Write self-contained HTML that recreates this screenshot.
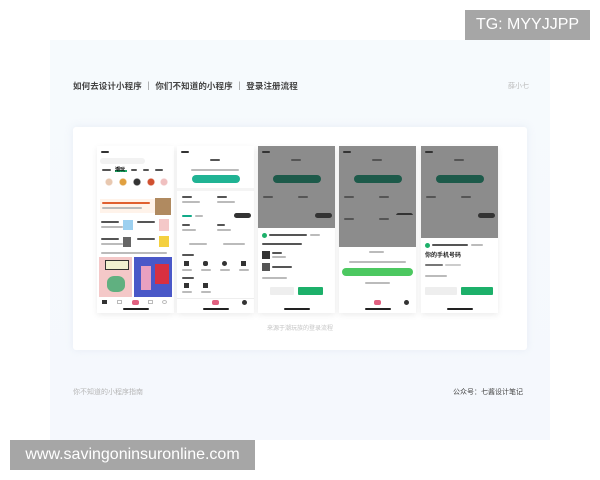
<!DOCTYPE html><html><head><meta charset="utf-8"><style>
*{margin:0;padding:0;box-sizing:border-box}
body{width:600px;height:480px;background:#fff;position:relative;overflow:hidden;font-family:"Liberation Sans","Noto Sans CJK SC",sans-serif}
.a{position:absolute}
.panel{left:50px;top:40px;width:500px;height:400px;background:linear-gradient(#f6fafd,#f5f8fd)}
.card{left:73px;top:127px;width:454px;height:223px;background:#fff;border-radius:3px;box-shadow:0 0 8px rgba(200,210,225,.3)}
.ph{top:146px;width:77px;height:167px;background:#fff;overflow:hidden;box-shadow:0 2px 6px rgba(0,0,0,.08)}
.g{position:absolute;height:2px;background:#bbb;border-radius:1px}
.gd{position:absolute;height:2px;background:#555;border-radius:1px}
.bar{position:absolute;left:26px;bottom:3px;width:26px;height:2px;background:#222;border-radius:1px}
.dark{position:absolute;left:0;top:0;width:77px;background:#8c8c8c}
.btn{position:absolute;border-radius:5px}
.t{position:absolute;font-size:5px;color:#333;white-space:nowrap}
</style></head><body>
<div class="a panel"></div>
<div class="a" style="left:73px;top:80px;font-size:8.5px;color:#444;font-weight:bold;letter-spacing:.1px">如何去设计小程序 ｜ 你们不知道的小程序 ｜ 登录注册流程</div>
<div class="a" style="left:508px;top:81px;font-size:7px;color:#bbb">薛小七</div>
<div class="a card"></div>

<!-- phone 1 -->
<div class="a ph" style="left:97px">
<div class="g" style="left:4px;top:5px;width:8px;background:#333"></div>
<div class="a" style="left:3px;top:12px;width:45px;height:6px;background:#f2f2f2;border-radius:3px"></div>
<div class="gd" style="left:5px;top:23px;width:9px"></div><div class="a" style="left:18px;top:20px;width:12px;height:6px;border-bottom:2px solid #1db06a;font-size:5px;font-weight:bold">潮玩</div>
<div class="gd" style="left:34px;top:23px;width:6px"></div><div class="gd" style="left:46px;top:23px;width:6px"></div><div class="gd" style="left:58px;top:23px;width:8px"></div>
<div class="a" style="left:4px;top:30px;width:68px;height:12px;background:radial-gradient(circle at 8px 6px,#e8c8b0 3px,transparent 4px),radial-gradient(circle at 22px 6px,#e0a040 3px,transparent 4px),radial-gradient(circle at 36px 6px,#333 3px,transparent 4px),radial-gradient(circle at 50px 6px,#d05030 3px,transparent 4px),radial-gradient(circle at 63px 6px,#f0c0c0 3px,transparent 4px)"></div>
<div class="a" style="left:3px;top:53px;width:55px;height:14px;background:#fff3ea"></div><div class="g" style="left:5px;top:56px;width:48px;background:#e06030"></div><div class="g" style="left:5px;top:61px;width:40px"></div>
<div class="a" style="left:58px;top:52px;width:16px;height:17px;background:#b08a60"></div>
<div class="gd" style="left:4px;top:75px;width:18px"></div><div class="g" style="left:4px;top:80px;width:22px"></div><div class="a" style="left:26px;top:74px;width:10px;height:10px;background:#9cd0f0"></div>
<div class="gd" style="left:40px;top:75px;width:18px"></div><div class="a" style="left:62px;top:73px;width:10px;height:12px;background:#f4c8c8"></div>
<div class="gd" style="left:4px;top:92px;width:18px"></div><div class="g" style="left:4px;top:97px;width:22px"></div><div class="a" style="left:26px;top:91px;width:8px;height:10px;background:#666"></div>
<div class="gd" style="left:40px;top:92px;width:18px"></div><div class="a" style="left:62px;top:90px;width:10px;height:11px;background:#f4d040"></div>
<div class="g" style="left:4px;top:106px;width:66px"></div>
<div class="a" style="left:2px;top:111px;width:33px;height:40px;background:#f4c8c8"></div><div class="a" style="left:8px;top:114px;width:24px;height:10px;background:#f0f0d0;border:1px solid #333"></div><div class="a" style="left:10px;top:130px;width:18px;height:16px;background:#60b080;border-radius:40%"></div>
<div class="a" style="left:37px;top:111px;width:38px;height:40px;background:#4a58c8"></div><div class="a" style="left:44px;top:120px;width:10px;height:24px;background:#e8a0c0"></div><div class="a" style="left:58px;top:118px;width:14px;height:20px;background:#d83040"></div>
<div class="a" style="left:0;top:152px;width:77px;height:15px;background:#fff"></div>
<div class="a" style="left:5px;top:154px;width:5px;height:4px;background:#333"></div><div class="a" style="left:20px;top:154px;width:5px;height:4px;border:1px solid #bbb"></div><div class="a" style="left:35px;top:154px;width:7px;height:5px;background:#e06080;border-radius:2px"></div><div class="a" style="left:51px;top:154px;width:5px;height:4px;border:1px solid #bbb"></div><div class="a" style="left:65px;top:154px;width:5px;height:4px;border:1px solid #bbb;border-radius:50%"></div>
<div class="bar"></div></div>

<!-- phone 2 -->
<div class="a ph" style="left:177px">
<div class="g" style="left:4px;top:5px;width:8px;background:#333"></div><div class="gd" style="left:33px;top:13px;width:10px"></div>
<div class="g" style="left:14px;top:23px;width:48px"></div>
<div class="btn" style="left:15px;top:29px;width:48px;height:8px;background:#20b394"></div>
<div class="a" style="left:0;top:42px;width:77px;height:3px;background:#f4f4f4"></div>
<div class="gd" style="left:5px;top:50px;width:10px"></div><div class="g" style="left:5px;top:55px;width:18px"></div><div class="gd" style="left:40px;top:50px;width:10px"></div><div class="g" style="left:40px;top:55px;width:18px"></div>
<div class="gd" style="left:5px;top:69px;width:10px;background:#1a8"></div><div class="g" style="left:18px;top:69px;width:8px"></div><div class="a" style="left:57px;top:67px;width:17px;height:5px;background:#333;border-radius:3px"></div>
<div class="gd" style="left:5px;top:78px;width:8px"></div><div class="g" style="left:5px;top:83px;width:14px"></div><div class="gd" style="left:40px;top:78px;width:8px"></div><div class="g" style="left:40px;top:83px;width:14px"></div>
<div class="g" style="left:12px;top:97px;width:18px"></div><div class="g" style="left:46px;top:97px;width:22px"></div>
<div class="gd" style="left:5px;top:108px;width:12px"></div>
<div class="a" style="left:7px;top:115px;width:5px;height:5px;background:#333"></div><div class="a" style="left:26px;top:115px;width:5px;height:5px;background:#333;border-radius:2px"></div><div class="a" style="left:45px;top:115px;width:5px;height:5px;background:#333;border-radius:50%"></div><div class="a" style="left:64px;top:115px;width:5px;height:5px;background:#333"></div>
<div class="g" style="left:5px;top:123px;width:10px"></div><div class="g" style="left:24px;top:123px;width:10px"></div><div class="g" style="left:43px;top:123px;width:10px"></div><div class="g" style="left:62px;top:123px;width:10px"></div>
<div class="gd" style="left:5px;top:131px;width:12px"></div>
<div class="a" style="left:7px;top:137px;width:5px;height:5px;background:#333"></div><div class="a" style="left:26px;top:137px;width:5px;height:5px;background:#333"></div>
<div class="g" style="left:5px;top:145px;width:10px"></div><div class="g" style="left:24px;top:145px;width:10px"></div>
<div class="a" style="left:0;top:152px;width:77px;height:15px;background:#fff;border-top:1px solid #eee"></div>
<div class="a" style="left:35px;top:154px;width:7px;height:5px;background:#e06080;border-radius:2px"></div><div class="a" style="left:65px;top:154px;width:5px;height:5px;background:#333;border-radius:50%"></div>
<div class="bar"></div></div>

<!-- phone 3 -->
<div class="a ph" style="left:258px">
<div class="dark" style="height:82px"></div>
<div class="g" style="left:4px;top:5px;width:8px;background:#333"></div><div class="gd" style="left:33px;top:13px;width:10px"></div>
<div class="btn" style="left:15px;top:29px;width:48px;height:8px;background:#1d5a4a"></div>
<div class="gd" style="left:5px;top:50px;width:10px"></div><div class="gd" style="left:40px;top:50px;width:10px"></div>
<div class="a" style="left:57px;top:67px;width:17px;height:5px;background:#333;border-radius:3px"></div>
<div class="a" style="left:0;top:82px;width:77px;height:85px;background:#fff;border-radius:4px 4px 0 0"></div>
<div class="a" style="left:4px;top:87px;width:5px;height:5px;background:#1db06a;border-radius:50%"></div><div class="gd" style="left:11px;top:88px;width:38px"></div><div class="g" style="left:52px;top:88px;width:10px"></div>
<div class="gd" style="left:4px;top:97px;width:40px"></div>
<div class="a" style="left:4px;top:105px;width:8px;height:8px;background:#333"></div><div class="gd" style="left:14px;top:106px;width:10px"></div><div class="g" style="left:14px;top:110px;width:14px"></div>
<div class="a" style="left:4px;top:117px;width:8px;height:8px;background:#555"></div><div class="gd" style="left:14px;top:120px;width:20px"></div>
<div class="g" style="left:4px;top:131px;width:25px"></div>
<div class="btn" style="left:12px;top:141px;width:24px;height:8px;background:#eee;border-radius:1px"></div><div class="btn" style="left:40px;top:141px;width:25px;height:8px;background:#1db06a;border-radius:1px"></div>
<div class="bar"></div></div>

<!-- phone 4 -->
<div class="a ph" style="left:339px">
<div class="dark" style="height:101px"></div>
<div class="g" style="left:4px;top:5px;width:8px;background:#333"></div><div class="gd" style="left:33px;top:13px;width:10px"></div>
<div class="btn" style="left:15px;top:29px;width:48px;height:8px;background:#1d5a4a"></div>
<div class="gd" style="left:5px;top:50px;width:10px"></div><div class="gd" style="left:40px;top:50px;width:10px"></div>
<div class="a" style="left:57px;top:67px;width:17px;height:5px;background:#333;border-radius:3px"></div>
<div class="a" style="left:0;top:69px;width:77px;height:100px;background:#fff"></div>
<div class="a" style="left:0;top:69px;width:77px;height:32px;background:#8c8c8c"></div>
<div class="gd" style="left:5px;top:72px;width:10px"></div><div class="gd" style="left:40px;top:72px;width:10px"></div>
<div class="g" style="left:30px;top:105px;width:15px"></div>
<div class="g" style="left:10px;top:115px;width:57px"></div>
<div class="btn" style="left:3px;top:122px;width:71px;height:8px;background:#4cc860"></div>
<div class="g" style="left:26px;top:136px;width:25px"></div>
<div class="a" style="left:35px;top:154px;width:7px;height:5px;background:#e06080;border-radius:2px"></div><div class="a" style="left:65px;top:154px;width:5px;height:5px;background:#333;border-radius:50%"></div>
<div class="bar"></div></div>

<!-- phone 5 -->
<div class="a ph" style="left:421px">
<div class="dark" style="height:92px"></div>
<div class="g" style="left:4px;top:5px;width:8px;background:#333"></div><div class="gd" style="left:33px;top:13px;width:10px"></div>
<div class="btn" style="left:15px;top:29px;width:48px;height:8px;background:#1d5a4a"></div>
<div class="gd" style="left:5px;top:50px;width:10px"></div><div class="gd" style="left:40px;top:50px;width:10px"></div>
<div class="a" style="left:57px;top:67px;width:17px;height:5px;background:#333;border-radius:3px"></div>
<div class="a" style="left:0;top:92px;width:77px;height:75px;background:#fff;border-radius:4px 4px 0 0"></div>
<div class="a" style="left:4px;top:97px;width:5px;height:5px;background:#1db06a;border-radius:50%"></div><div class="gd" style="left:11px;top:98px;width:36px"></div><div class="g" style="left:50px;top:98px;width:12px"></div>
<div class="a" style="left:4px;top:104px;font-size:6px;font-weight:bold;color:#222">你的手机号码</div>
<div class="gd" style="left:4px;top:118px;width:18px;background:#777"></div><div class="g" style="left:24px;top:118px;width:16px;background:#ccc"></div>
<div class="g" style="left:4px;top:129px;width:22px"></div>
<div class="btn" style="left:4px;top:141px;width:32px;height:8px;background:#eee;border-radius:1px"></div><div class="btn" style="left:40px;top:141px;width:32px;height:8px;background:#1db06a;border-radius:1px"></div>
<div class="bar"></div></div>

<div class="a" style="left:0;width:600px;top:323px;text-align:center;font-size:6px;color:#c4c4c4">来源于潮玩族的登录流程</div>
<div class="a" style="left:73px;top:387px;font-size:7px;color:#b5b5b5">你不知道的小程序指南</div>
<div class="a" style="left:453px;top:387px;font-size:7px;color:#444">公众号：七酱设计笔记</div>
<div class="a" style="left:465px;top:10px;width:125px;height:30px;background:#a6a6a6;color:#fff;font-size:16px;line-height:30px;text-align:center">TG: MYYJJPP</div>
<div class="a" style="left:10px;top:440px;width:245px;height:30px;background:#a6a6a6;color:#fff;font-size:16px;line-height:30px;text-align:center">www.savingoninsuronline.com</div>
</body></html>
